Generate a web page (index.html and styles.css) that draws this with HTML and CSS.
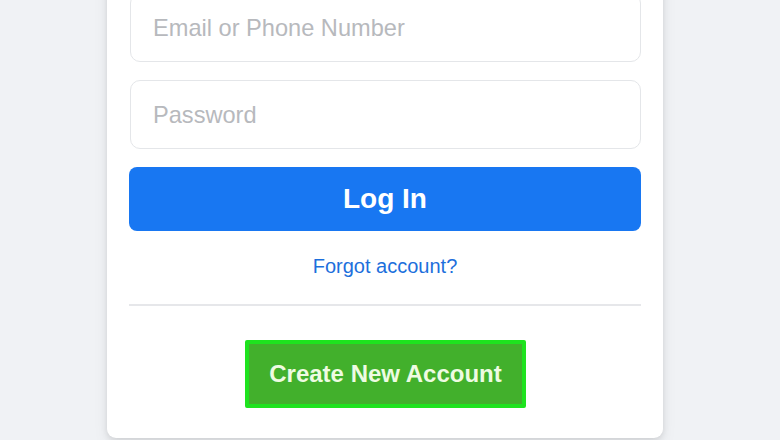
FILE: index.html
```html
<!DOCTYPE html>
<html lang="en">
<head>
<meta charset="utf-8">
<title>Log In</title>
<link rel="stylesheet" href="styles.css">
</head>
<body>
<main class="page">
  <form class="card">
    <div class="field"><span class="placeholder">Email or Phone Number</span></div>
    <div class="field"><span class="placeholder">Password</span></div>
    <div class="login-btn">Log In</div>
    <div class="forgot">Forgot account?</div>
    <hr class="divider">
    <div class="create-row">
      <div class="create-btn">Create New Account</div>
    </div>
  </form>
</main>
</body>
</html>
```

FILE: styles.css
```css
html, body {
  margin: 0;
  padding: 0;
  background: #f0f2f5;
  width: 780px;
  height: 440px;
  overflow: hidden;
  font-family: "Liberation Sans", Arial, sans-serif;
}

.page {
  display: flex;
  padding-left: 107px;
}

.card {
  width: 512px;
  margin-top: -29px;
  padding: 22px 22px 30px 22px;
  background: #ffffff;
  border-radius: 9px;
  box-shadow: 0 2px 6px rgba(0, 0, 0, 0.1), 0 8px 16px rgba(0, 0, 0, 0.06);
  display: flex;
  flex-direction: column;
}

.field {
  height: 66px;
  margin-left: 1px;
  border: 1px solid #e4e6e9;
  border-radius: 10px;
  display: flex;
  align-items: center;
  padding-left: 22px;
  padding-top: 1px;
  margin-bottom: 18px;
}

.placeholder {
  font-size: 23.6px;
  color: #b7b9bd;
}

.login-btn {
  height: 64px;
  background: #1877f2;
  border-radius: 8px;
  color: #ffffff;
  font-weight: bold;
  font-size: 28px;
  display: flex;
  align-items: center;
  justify-content: center;
}

.forgot {
  margin-top: 23px;
  text-align: center;
  font-size: 20px;
  line-height: 24px;
  color: #1d6fdc;
}

.divider {
  margin: 26px 0 0 0;
  border: 0;
  border-top: 2px solid #e6e7ea;
  height: 0;
}

.create-row {
  display: flex;
  justify-content: center;
  margin-top: 34px;
  padding-left: 1px;
}

.create-btn {
  height: 60px;
  padding: 0 20px;
  background: #42b02c;
  border: 4px solid #1ee31e;
  border-radius: 2px;
  color: #eefbe2;
  font-weight: bold;
  font-size: 24px;
  display: flex;
  align-items: center;
}
```
